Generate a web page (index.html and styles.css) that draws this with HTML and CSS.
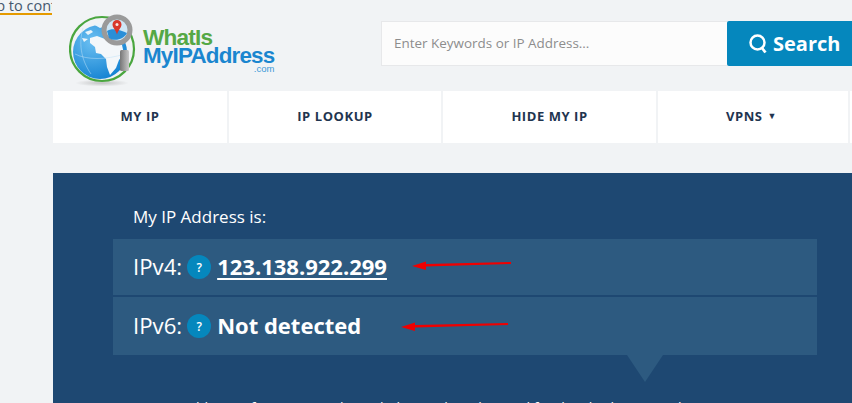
FILE: index.html
```html
<!DOCTYPE html>
<html lang="en">
<head>
<meta charset="utf-8">
<title>What Is My IP Address</title>
<link rel="stylesheet" href="styles.css">
</head>
<body>
<a class="skip" href="#main">Skip to content</a>
<div class="page">
  <header class="top">
    <a class="logo" href="#">
      <svg class="logo-mark" width="72" height="72" viewBox="0 0 72 72" aria-hidden="true">
        <defs>
          <radialGradient id="sea" cx="35%" cy="30%" r="80%"><stop offset="0" stop-color="#6cc0f2"/><stop offset="1" stop-color="#0f7fd0"/></radialGradient>
          <radialGradient id="shade"><stop offset="0" stop-color="#9a9a9a" stop-opacity=".55"/><stop offset="1" stop-color="#9a9a9a" stop-opacity="0"/></radialGradient>
          <linearGradient id="steel" x1="0" x2="1"><stop offset="0" stop-color="#777"/><stop offset="1" stop-color="#c8c8c8"/></linearGradient>
        </defs>
        <ellipse cx="33" cy="69" rx="27" ry="3.500" fill="url(#shade)"/>
        <circle cx="33" cy="35" r="32" fill="none" stroke="#4aa63f" stroke-width="2.200"/>
        <circle cx="31" cy="38" r="27" fill="url(#sea)"/>
        <path d="M24 10l8-1 5 3-6 2zM16 18l6-2 2 2-5 3zM13 24l6 1-4 3z" fill="#eaf4fa"/>
        <path d="M21 24l7-2 8 3 9 5 8 1 2 9-5 6-3 8-6 7-3-8-1-8-5-5-5-1-1-6-5-4z" fill="#f3f7fa"/>
        <path d="M6 40c12 6 30 6 50 0M14 14c-4 14-3 30 8 46" fill="none" stroke="#bfe1f6" stroke-width=".5"/>
        <rect x="51" y="36" width="9" height="21" rx="1.500" fill="url(#steel)"/>
        <circle cx="48" cy="16" r="13" fill="#cfe7f6" stroke="#9a9a9a" stroke-width="5"/>
        <path d="M38 17c4-3 12-2 20 2-3 6-12 9-18 5z" fill="#2a8fd8"/>
        <path d="M48 6a4.500 4.500 0 0 1 4.500 4.500c0 3-3 5-4.500 10-1.500-5-4.500-7-4.500-10A4.500 4.500 0 0 1 48 6z" fill="#d9372c"/>
        <circle cx="48" cy="10.500" r="1.500" fill="#f6e5e0"/>
      </svg>
      <span class="logo-text">
        <span class="logo-what">WhatIs</span>
        <span class="logo-my">MyIPAddress</span>
        <span class="logo-com">.com</span>
      </span>
    </a>
    <form class="search">
      <input class="search-input" type="text" placeholder="Enter Keywords or IP Address...">
      <button class="search-btn" type="button">
        <svg width="19" height="20" viewBox="0 0 19 20" aria-hidden="true"><circle cx="8.500" cy="8.500" r="7" fill="none" stroke="#fff" stroke-width="2.500"/><path d="M13 14l3.500 4.500" stroke="#fff" stroke-width="2.800" fill="none"/></svg>
        Search
      </button>
    </form>
  </header>
  <nav class="nav">
    <a class="nav-item nav-a" href="#">MY IP</a>
    <a class="nav-item nav-b" href="#">IP LOOKUP</a>
    <a class="nav-item nav-c" href="#">HIDE MY IP</a>
    <a class="nav-item nav-d" href="#">VPNS <span class="caret">▼</span></a>
    <a class="nav-item nav-e" href="#"></a>
  </nav>
  <main class="hero" id="main">
    <p class="hero-title">My IP Address is:</p>
    <div class="ip-row ip-row-first">
      <span class="ip-label">IPv4:</span><span class="help">?</span><a class="ip-value ip-link" href="#">123.138.922.299</a>
    </div>
    <div class="ip-row ip-row-second">
      <span class="ip-label">IPv6:</span><span class="help">?</span><span class="ip-value">Not detected</span>
    </div>
    <div class="pointer"></div>
    <p class="hero-text">Your IP address information is shown below and can be used for details about your location</p>
  </main>
</div>
<svg class="arrow arrow-one" width="100" height="10" viewBox="0 0 100 10" aria-hidden="true"><path d="M0 6L14 1.500 14 4 99 2 99 4 14 6.500 14 10z" fill="#f00000"/></svg>
<svg class="arrow arrow-two" width="108" height="10" viewBox="0 0 108 10" aria-hidden="true"><path d="M0 6L14 1.500 14 4 107 2 107 4 14 6.500 14 10z" fill="#f00000"/></svg>
</body>
</html>
```
FILE: styles.css
```css
* { box-sizing: border-box; }
html, body { margin: 0; height: 403px; overflow: hidden; }
body { background: #f1f3f5; font-family: "Open Sans", sans-serif; color: #1f3550; position: relative; }
a { text-decoration: none; color: inherit; }
.skip { position: absolute; left: -23px; top: -4px; width: 75px; height: 19px; overflow: hidden; white-space: nowrap; font-size: 14.500px; line-height: 20px; color: #45586f; border-bottom: 2px solid #e59a00; }
.page { margin-left: 53px; width: 799px; }
.top { height: 91px; display: flex; align-items: flex-start; }
.logo { display: flex; margin-left: 16px; padding-top: 14px; width: 312px; }
.logo-mark { flex: none; }
.logo-text { display: flex; flex-direction: column; margin-left: 2px; padding-top: 15px; font-family: "Liberation Sans", sans-serif; font-weight: 700; letter-spacing: -.8px; }
.logo-what { color: #55a845; font-size: 22.600px; line-height: 18px; }
.logo-my { color: #1a86cf; font-size: 22.400px; line-height: 18px; }
.logo-com { color: #3c98d8; font-size: 9.500px; line-height: 8px; font-weight: 400; letter-spacing: 0; align-self: flex-end; }
.search { display: flex; margin-top: 21px; height: 45px; flex: none; }
.search-input { width: 346px; height: 45px; border: 1px solid #e7e8ea; border-right: 0; background: #fcfcfc; padding: 0 12px 2px; font: 13.450px "Open Sans", sans-serif; color: #555; }
.search-input::placeholder { color: #8d8d8d; opacity: 1; }
.search-btn { width: 125px; height: 45px; border: 0; border-radius: 2px 0 0 2px; background: #0587bd; color: #fff; font: 700 20px "Open Sans", sans-serif; display: flex; align-items: center; gap: 5px; padding: 0 0 0 22px; }
.nav { display: flex; gap: 2px; height: 52px; overflow: hidden; }
.nav-item { background: #fff; display: flex; align-items: center; justify-content: center; gap: 5px; padding-bottom: 2px; font-size: 13px; font-weight: 700; letter-spacing: .55px; color: #1f3550; flex: none; }
.nav-a { width: 174px; }
.nav-b { width: 212px; }
.nav-c { width: 213px; }
.nav-d { width: 190px; padding-right: 3px; }
.nav-e { width: 60px; }
.caret { font-size: 9px; position: relative; top: -1px; }
.hero { margin-top: 30px; height: 230px; background: #1e4872; color: #fff; padding: 32px 0 0 60px; position: relative; overflow: hidden; }
.hero-title { margin: 0 0 11px 20px; font-size: 17px; line-height: 23px; }
.ip-row { width: 704px; background: #2d5a80; display: flex; align-items: center; padding: 0 0 2px 20px; }
.ip-row-first { height: 56px; margin-bottom: 2px; }
.ip-row-second { height: 58px; }
.ip-label { font-size: 22.200px; font-weight: 400; margin-right: 5px; }
.help { width: 24px; height: 24px; border-radius: 50%; background: #0587bd; font-size: 12px; font-weight: 600; display: flex; align-items: center; justify-content: center; margin-right: 6px; flex: none; position: relative; top: 1px; }
.ip-value { font-size: 22px; font-weight: 700; line-height: 26px; }
.ip-link { text-decoration: underline; text-decoration-thickness: 2px; text-underline-offset: 3px; }
.pointer { margin-left: 514px; width: 0; height: 0; border-left: 18px solid transparent; border-right: 18px solid transparent; border-top: 27px solid #2d5a80; }
.hero-text { margin: 16px 0 0 20px; width: 680px; font-size: 14px; line-height: 20px; white-space: nowrap; }
.arrow { position: absolute; }
.arrow-one { left: 412px; top: 260px; }
.arrow-two { left: 401px; top: 321px; }
```
